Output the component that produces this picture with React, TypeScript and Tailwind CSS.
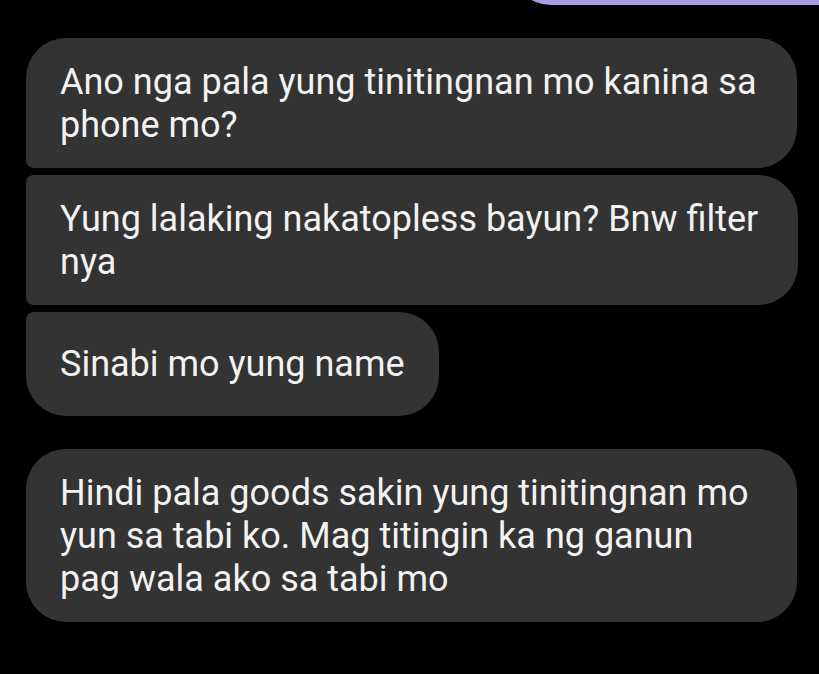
type Bubble = {
  text: string[];
  corners: string;
  width: string;
  pad: string;
};

const bubbles: Bubble[] = [
  {
    text: ['Ano nga pala yung tinitingnan mo kanina sa', 'phone mo?'],
    corners: 'rounded-tl-[40px] rounded-tr-[40px] rounded-br-[40px] rounded-bl-[8px]',
    width: 'w-[771px]',
    pad: 'pt-[23px] pb-[21px]',
  },
  {
    text: ['Yung lalaking nakatopless bayun? Bnw filter', 'nya'],
    corners: 'rounded-tl-[8px] rounded-tr-[40px] rounded-br-[40px] rounded-bl-[8px]',
    width: 'w-[772px]',
    pad: 'pt-[23px] pb-[21px]',
  },
  {
    text: ['Sinabi mo yung name'],
    corners: 'rounded-tl-[8px] rounded-tr-[40px] rounded-br-[40px] rounded-bl-[40px]',
    width: 'w-[413px]',
    pad: 'pt-[31px] pb-[30px]',
  },
];

const last: Bubble = {
  text: [
    'Hindi pala goods sakin yung tinitingnan mo',
    'yun sa tabi ko. Mag titingin ka ng ganun',
    'pag wala ako sa tabi mo',
  ],
  corners: 'rounded-[40px]',
  width: 'w-[771px]',
  pad: 'pt-[23px] pb-[21px]',
};

function MessageBubble({ bubble }: { bubble: Bubble }) {
  return (
    <div
      className={`${bubble.width} ${bubble.corners} ${bubble.pad} bg-[#333333] pl-[34px] pr-[34px] text-[36px] leading-[43px] text-[#f2f2f2]`}
    >
      {bubble.text.map((line, i) => (
        <div key={i} className="whitespace-nowrap">
          {line}
        </div>
      ))}
    </div>
  );
}

export default function App() {
  return (
    <div
      className="w-[819px] h-[674px] overflow-hidden bg-black"
      style={{ fontFamily: 'Roboto, "Noto Sans", sans-serif' }}
    >
      <div className="flex justify-end">
        <div className="mt-[-40px] h-[45px] w-[308px] rounded-bl-[40px] bg-[#a99ae6]" />
      </div>
      <div className="flex flex-col pl-[26px] pt-[33px]">
        <div className="flex flex-col gap-[7px]">
          {bubbles.map((b, i) => (
            <MessageBubble key={i} bubble={b} />
          ))}
        </div>
        <div className="mt-[33px]">
          <MessageBubble bubble={last} />
        </div>
      </div>
    </div>
  );
}
